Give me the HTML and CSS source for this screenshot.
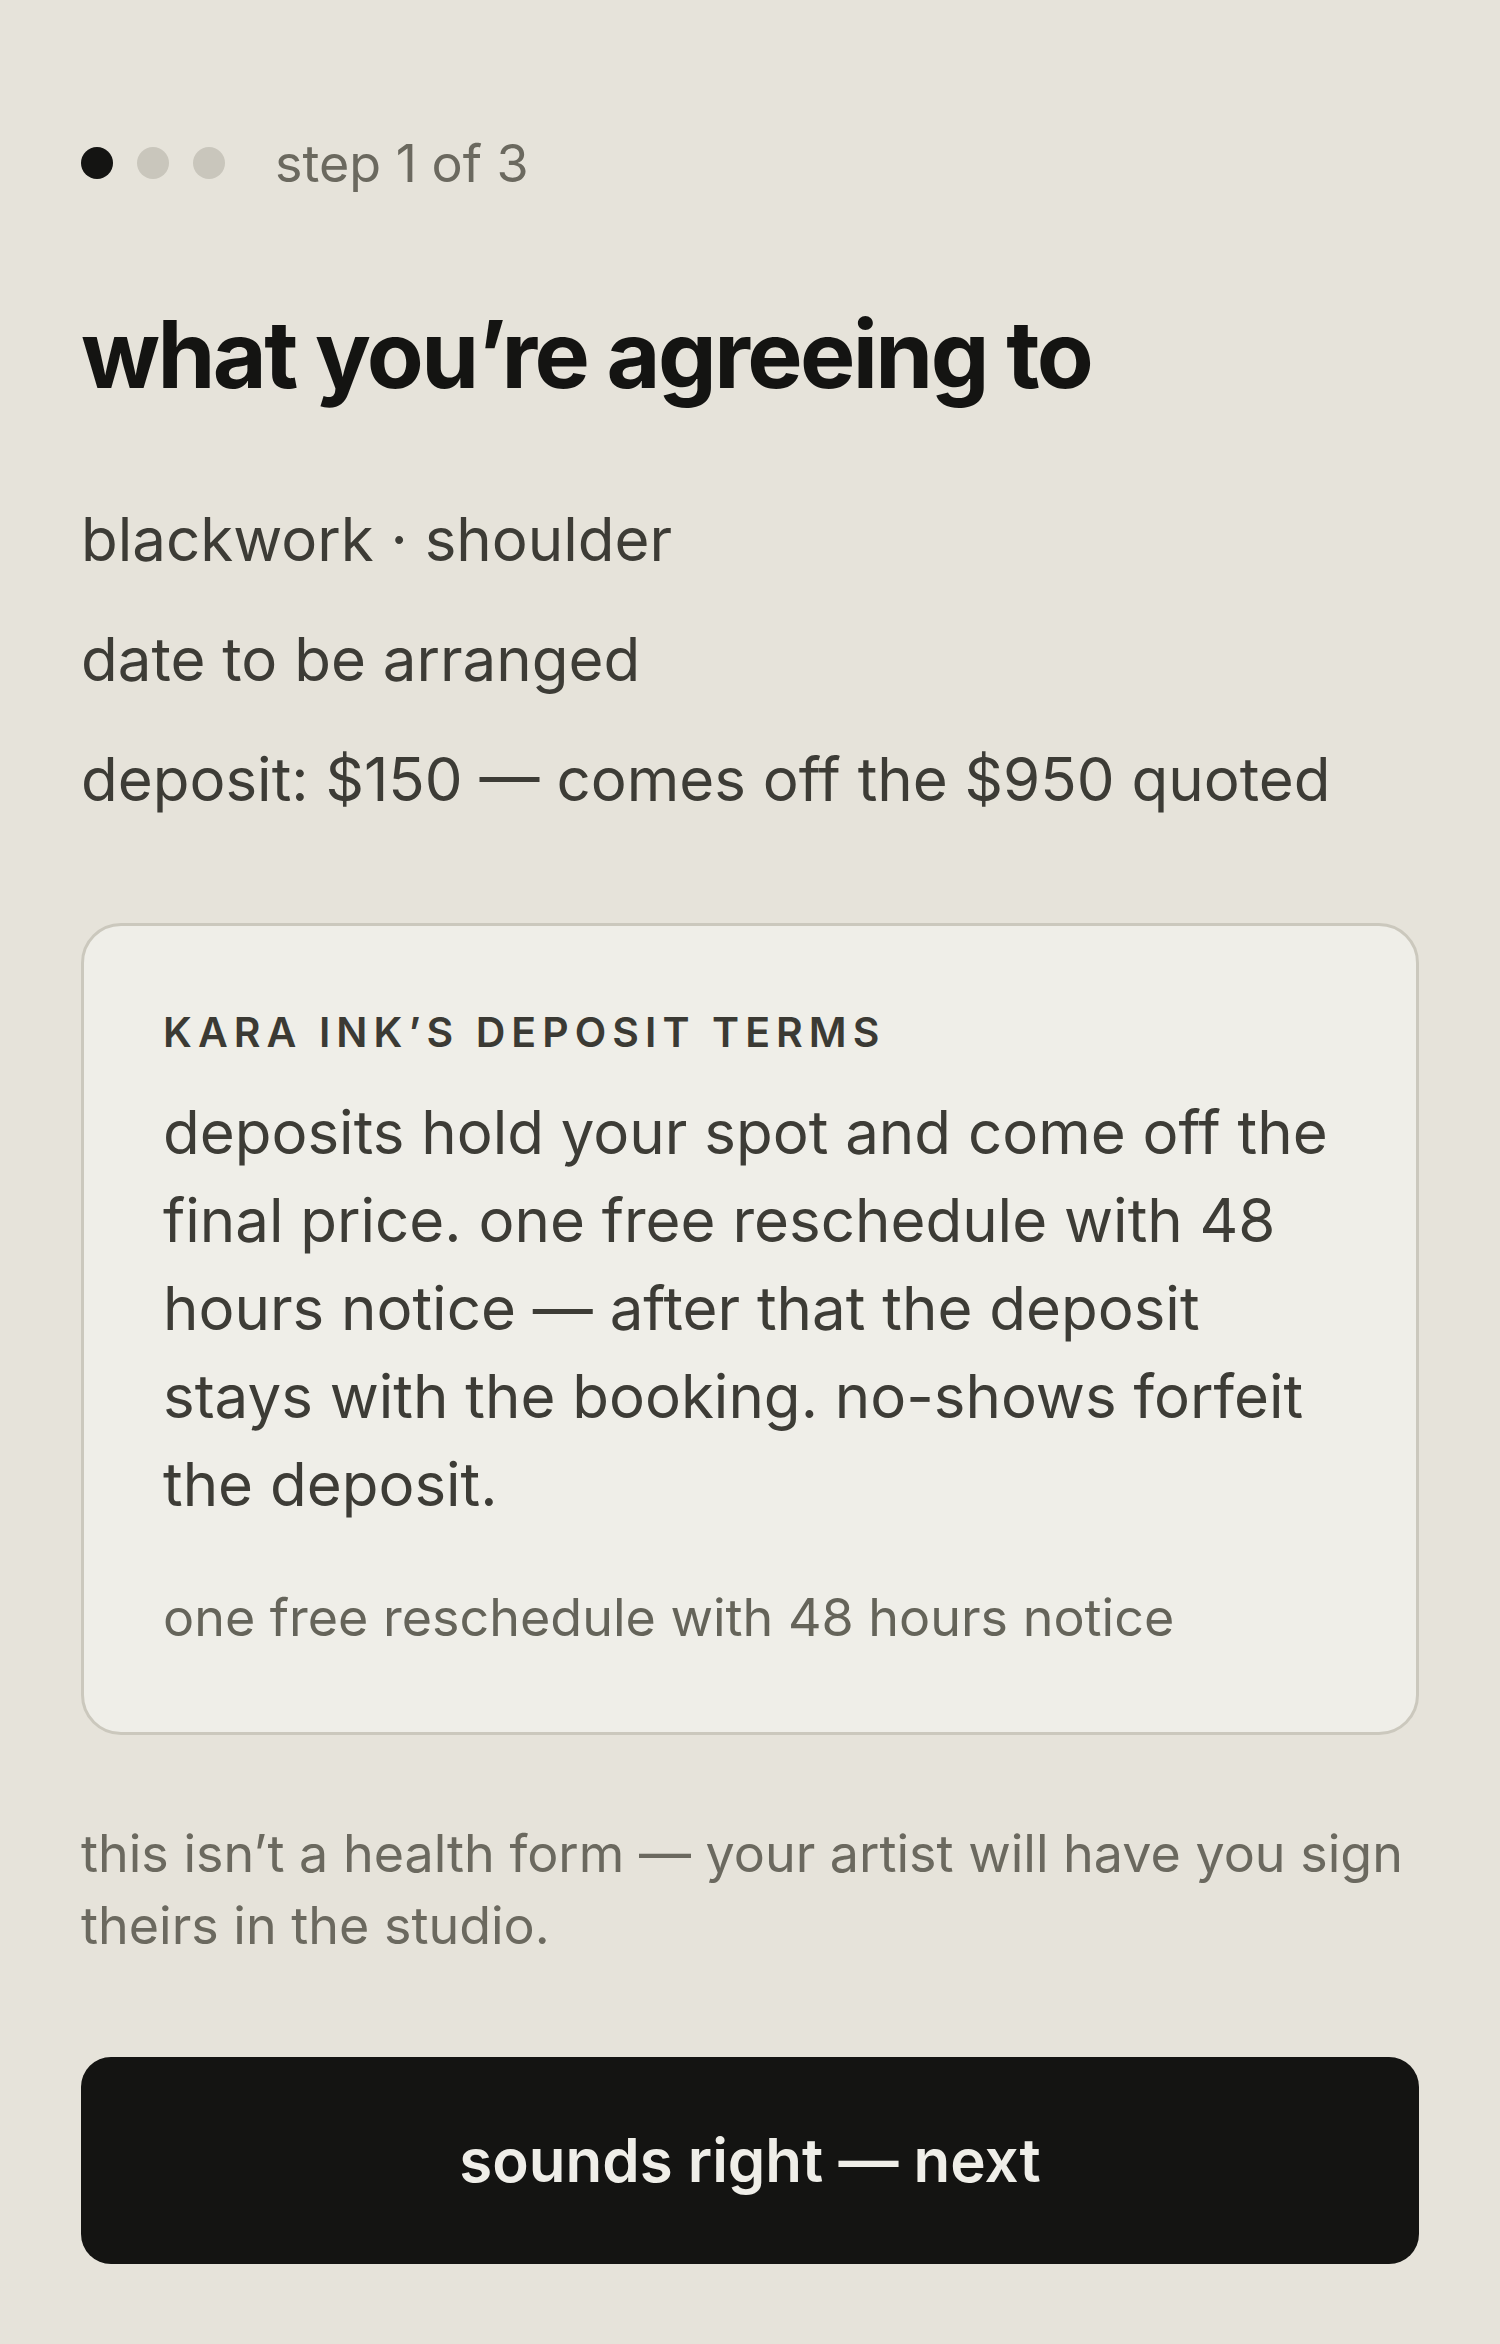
FILE: index.html
```html
<!DOCTYPE html>
<html lang="en">
<head>
  <meta charset="UTF-8" />
  <meta name="viewport" content="width=device-width, initial-scale=1.0"/>
  <title>Booking — deposit terms</title>
  <link rel="stylesheet" href="styles.css">
</head>
<body>
  <main class="page">
    <div class="steps">
      <div class="dots">
        <span class="dot active"></span>
        <span class="dot"></span>
        <span class="dot"></span>
      </div>
      <span class="step-label">step 1 of 3</span>
    </div>

    <h1 class="title">what you’re agreeing to</h1>

    <ul class="summary">
      <li>blackwork · shoulder</li>
      <li>date to be arranged</li>
      <li>deposit: $150 — comes off the $950 quoted</li>
    </ul>

    <section class="terms">
      <h2 class="terms-heading">Kara Ink’s deposit terms</h2>
      <p class="terms-body">deposits hold your spot and come off the final price. one free reschedule with 48 hours notice — after that the deposit stays with the booking. no-shows forfeit the deposit.</p>
      <p class="terms-note">one free reschedule with 48 hours notice</p>
    </section>

    <p class="disclaimer">this isn’t a health form — your artist will have you sign theirs in the studio.</p>

    <button class="next-button">sounds right — next</button>
  </main>
</body>
</html>
```

FILE: styles.css
```css
body {
  margin: 0;
  padding: 0;
  background: #e6e3da;
  font-family: Inter, "Noto Sans", sans-serif;
  color: #3d3c36;
}
.page {
  padding: 133px 81px 80px;
}

/* progress */
.steps {
  display: flex;
  align-items: center;
  gap: 50px;
}
.dots {
  display: flex;
  gap: 24px;
  margin-top: -2px;
}
.dot {
  width: 32px;
  height: 32px;
  border-radius: 50%;
  background: #c9c6bc;
}
.dot.active {
  background: #141412;
}
.step-label {
  font-size: 52px;
  line-height: 1.2;
  color: #6b695f;
}

.title {
  margin: 108px 0 0;
  font-size: 93px;
  line-height: 1.1;
  font-weight: 700;
  letter-spacing: -0.028em;
  color: #141412;
}

.summary {
  list-style: none;
  margin: 91px 0 0;
  padding: 0;
  display: flex;
  flex-direction: column;
  gap: 36px;
}
.summary li {
  font-size: 60px;
  line-height: 84px;
}

/* terms card */
.terms {
  margin-top: 102px;
  padding: 80px 79px 77px;
  background: #efeee8;
  border: 3px solid #cbc8bd;
  border-radius: 40px;
}
.terms-heading {
  margin: 0;
  font-size: 41px;
  line-height: 1.3;
  font-weight: 600;
  letter-spacing: 0.148em;
  text-transform: uppercase;
  color: #3b3a34;
}
.terms-body {
  margin: 29px 0 0;
  font-size: 60px;
  line-height: 88px;
}
.terms-note {
  margin: 54px 0 0;
  font-size: 52px;
  line-height: 1.4;
  color: #65645a;
}

.disclaimer {
  margin: 83px 0 0;
  font-size: 52px;
  line-height: 72px;
  color: #6b695f;
}

.next-button {
  display: block;
  width: 100%;
  height: 207px;
  margin-top: 95px;
  border: none;
  border-radius: 30px;
  background: #141412;
  color: #efeee8;
  font-family: inherit;
  font-size: 60px;
  font-weight: 600;
  cursor: pointer;
}
```
